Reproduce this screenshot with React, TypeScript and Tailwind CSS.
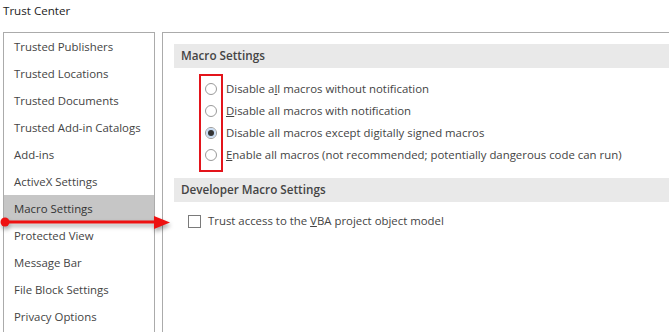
import React from 'react';

const navItems = [
  'Trusted Publishers',
  'Trusted Locations',
  'Trusted Documents',
  'Trusted Add-in Catalogs',
  'Add-ins',
  'ActiveX Settings',
  'Macro Settings',
  'Protected View',
  'Message Bar',
  'File Block Settings',
  'Privacy Options',
];

function Radio({ checked }: { checked?: boolean }) {
  return (
    <span className="flex h-[12px] w-[12px] shrink-0 items-center justify-center rounded-full border border-[#9a9a9a] bg-white">
      {checked && <span className="h-[6px] w-[6px] rounded-full bg-[#333] ring-2 ring-[#c9dcf2]" />}
    </span>
  );
}

function SectionHeader({ children }: { children: React.ReactNode }) {
  return (
    <div className="flex h-[24px] items-center bg-[#e9e9e9] pl-[7px] text-[11.7px] font-semibold text-[#444]">
      {children}
    </div>
  );
}

export default function App() {
  const radios: { label: React.ReactNode; checked?: boolean }[] = [
    { label: <>Disable a<u>l</u>l macros without notification</> },
    { label: <><u>D</u>isable all macros with notification</> },
    { label: <>Disable all macros except digitally signed macros</>, checked: true },
    { label: <><u>E</u>nable all macros (not recommended; potentially dangerous code can run)</> },
  ];

  return (
    <div className="relative h-[332px] w-[669px] overflow-hidden bg-white font-['Open_Sans',sans-serif] text-[11.4px] text-[#444]">
      {/* Title */}
      <div className="flex h-[32px] items-start pl-[3px] pt-[2px] text-[11.6px] text-[#222]">Trust Center</div>

      <div className="flex gap-[7px] pl-[3px]">
        {/* Sidebar */}
        <nav className="h-[300px] w-[152px] shrink-0 border border-b-0 border-[#ababab]">
          {navItems.map((item) => (
            <div
              key={item}
              className={`flex h-[27px] items-center pl-[10px] ${
                item === 'Macro Settings' ? 'bg-[#c6c6c6] text-[#333]' : ''
              }`}
            >
              {item}
            </div>
          ))}
        </nav>

        {/* Content */}
        <main className="h-[300px] flex-1 border-l border-t border-[#ababab] pl-[11px] pt-[11px]">
          <SectionHeader>Macro Settings</SectionHeader>

          <div className="relative mt-[10px] mb-[12px] pl-[31px]">
            {radios.map((r, i) => (
              <div key={i} className="flex h-[22px] items-center gap-[9px] whitespace-nowrap">
                <Radio checked={r.checked} />
                <span>{r.label}</span>
              </div>
            ))}
            {/* red highlight box */}
            <div className="absolute left-[25px] top-[-4px] h-[98px] w-[24px] border-[2.5px] border-[#e3141b]" />
          </div>

          <SectionHeader>Developer Macro Settings</SectionHeader>

          <div className="mt-[8px] flex h-[22px] items-center gap-[7px] pl-[14px]">
            <span className="h-[13px] w-[13px] shrink-0 border border-[#7a7a7a] bg-white" />
            <span>
              Trust access to the <u>V</u>BA project object model
            </span>
          </div>
        </main>
      </div>

      {/* Red arrow annotation */}
      <svg
        className="pointer-events-none absolute left-0 top-[212px] drop-shadow-[1px_3px_2px_rgba(0,0,0,0.35)]"
        width="175"
        height="22"
        viewBox="0 0 175 22"
      >
        <circle cx="5" cy="10" r="4.5" fill="#ee1111" />
        <rect x="5" y="8.5" width="152" height="3" fill="#ee1111" />
        <polygon points="154,4 170,10.5 154,17" fill="#ee1111" />
      </svg>
    </div>
  );
}
